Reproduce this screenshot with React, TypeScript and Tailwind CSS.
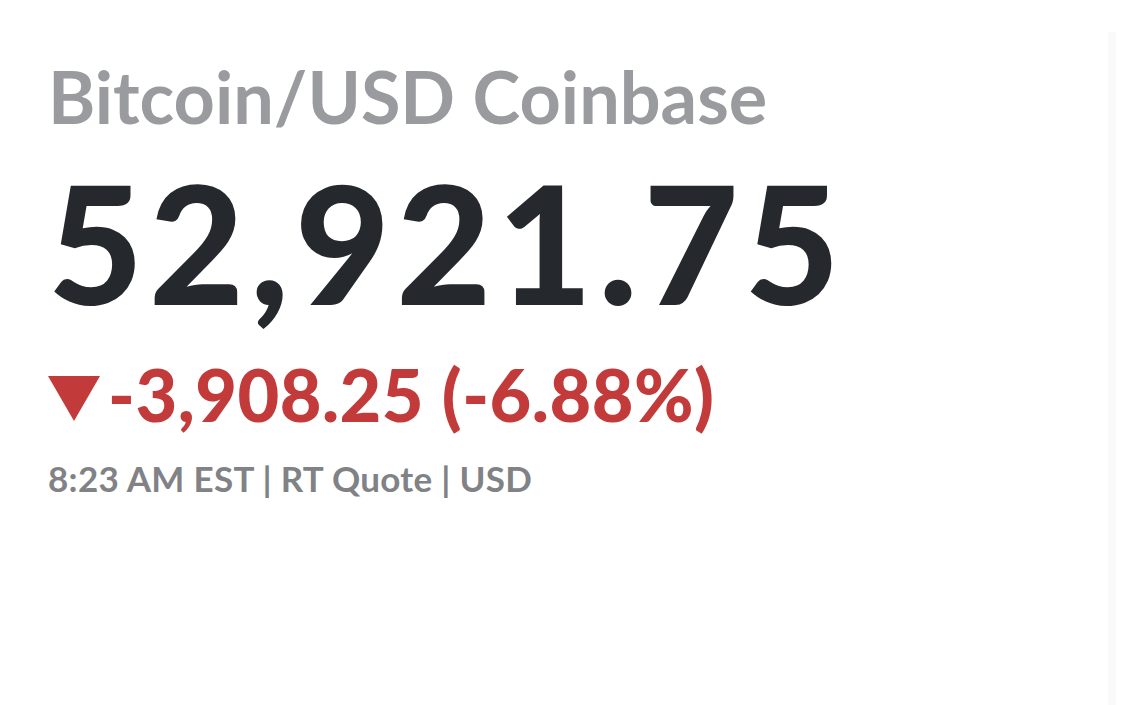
export default function App() {
  return (
    <div className="relative w-[1125px] h-[705px] bg-white overflow-hidden" style={{ fontFamily: "Lato, 'Liberation Sans', sans-serif" }}>
      <div className="absolute right-[9px] top-[32px] bottom-0 w-[8px] bg-[#fafafa]" />
      <div className="flex flex-col pl-[48px] pt-[53px]">
        <div className="text-[72px] leading-[86px] font-bold text-[#9a9b9f] whitespace-nowrap">Bitcoin/USD Coinbase</div>
        <div className="text-[164px] leading-[205px] font-black tracking-[6px] text-[#25282c] whitespace-nowrap">52,921.75</div>
        <div className="flex items-center h-[100px] text-[72px] leading-[100px] font-black tracking-[0.5px] text-[#c23b3a] whitespace-nowrap">
          <svg width="52" height="45" viewBox="0 0 52 45" className="mr-[8px] mt-[9px] shrink-0"><polygon points="0,0 52,0 26,45" fill="#c23b3a" /></svg>
          <span>-3,908.25 (-6.88%)</span>
        </div>
        <div className="text-[35px] leading-[69px] font-bold tracking-[0.3px] text-[#808286] whitespace-nowrap">8:23 AM EST | RT Quote | USD</div>
      </div>
    </div>
  );
}
